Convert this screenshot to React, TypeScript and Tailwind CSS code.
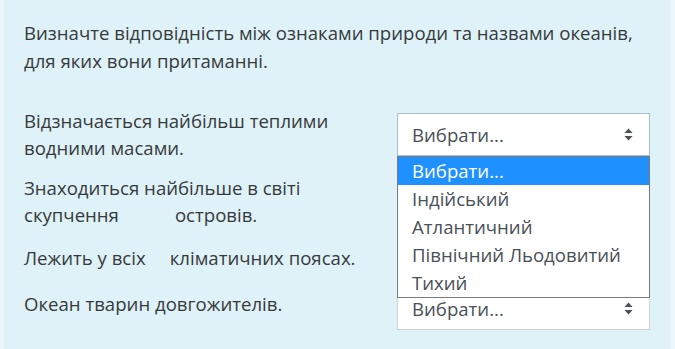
import React from "react";

const font = { fontFamily: '"Open Sans", "Noto Sans", sans-serif' };

function Chevron() {
  return (
    <svg width="9" height="13" viewBox="0 0 9 13" className="shrink-0">
      <path d="M4.5 0.5 L8.5 5 L0.5 5 Z" fill="#495057" />
      <path d="M4.5 12.5 L8.5 8 L0.5 8 Z" fill="#495057" />
    </svg>
  );
}

function Select({ focused }: { focused?: boolean }) {
  return (
    <div
      className={
        "w-[253px] h-[43px] bg-white flex items-center justify-between pl-[14px] pr-[16px] text-[#495057] border " +
        (focused ? "border-[#a8c0d2]" : "border-[#ced4da]")
      }
    >
      <span>Вибрати...</span>
      <Chevron />
    </div>
  );
}

const options = ["Вибрати...", "Індійський", "Атлантичний", "Північний Льодовитий", "Тихий"];

export default function App() {
  return (
    <div className="w-[675px] h-[349px] overflow-hidden bg-[#eaf6fa] text-[18.6px] text-[#373a3c]" style={font}>
      <div className="ml-[4px] mr-[5px] h-full bg-[#def2f8] pl-[20px] pr-[20px] pt-[19px]">
        <p className="leading-[28px] whitespace-nowrap">
          Визначте відповідність між ознаками природи та назвами океанів,
          <br />
          для яких вони притаманні.
        </p>

        <div className="mt-[32px] flex flex-col leading-[27px]">
          <div className="relative z-10 flex items-center justify-between">
            <div>
              Відзначається найбільш теплими
              <br />
              водними масами.
            </div>
            <div className="relative">
              <Select focused />
              <div className="absolute left-0 top-full w-full bg-white border border-[#7a7a7a]">
                {options.map((o, i) => (
                  <div
                    key={o}
                    className={
                      "h-[28px] px-[14px] flex items-center whitespace-nowrap " +
                      (i === 0 ? "bg-[#1e90ff] text-white" : "text-[#495057]")
                    }
                  >
                    {o}
                  </div>
                ))}
              </div>
            </div>
          </div>

          <div className="mt-[13px] flex items-center justify-between">
            <div>
              Знаходиться найбільше в світі
              <br />
              скупчення<span className="inline-block w-[56px]" />островів.
            </div>
            <Select />
          </div>

          <div className="mt-[8px] flex items-center justify-between">
            <div>
              Лежить у всіх<span className="inline-block w-[24px]" />кліматичних поясах.
            </div>
            <Select />
          </div>

          <div className="mt-[8px] flex items-center justify-between">
            <div className="mb-[10px]">Океан тварин довгожителів.</div>
            <Select />
          </div>
        </div>
      </div>
    </div>
  );
}
